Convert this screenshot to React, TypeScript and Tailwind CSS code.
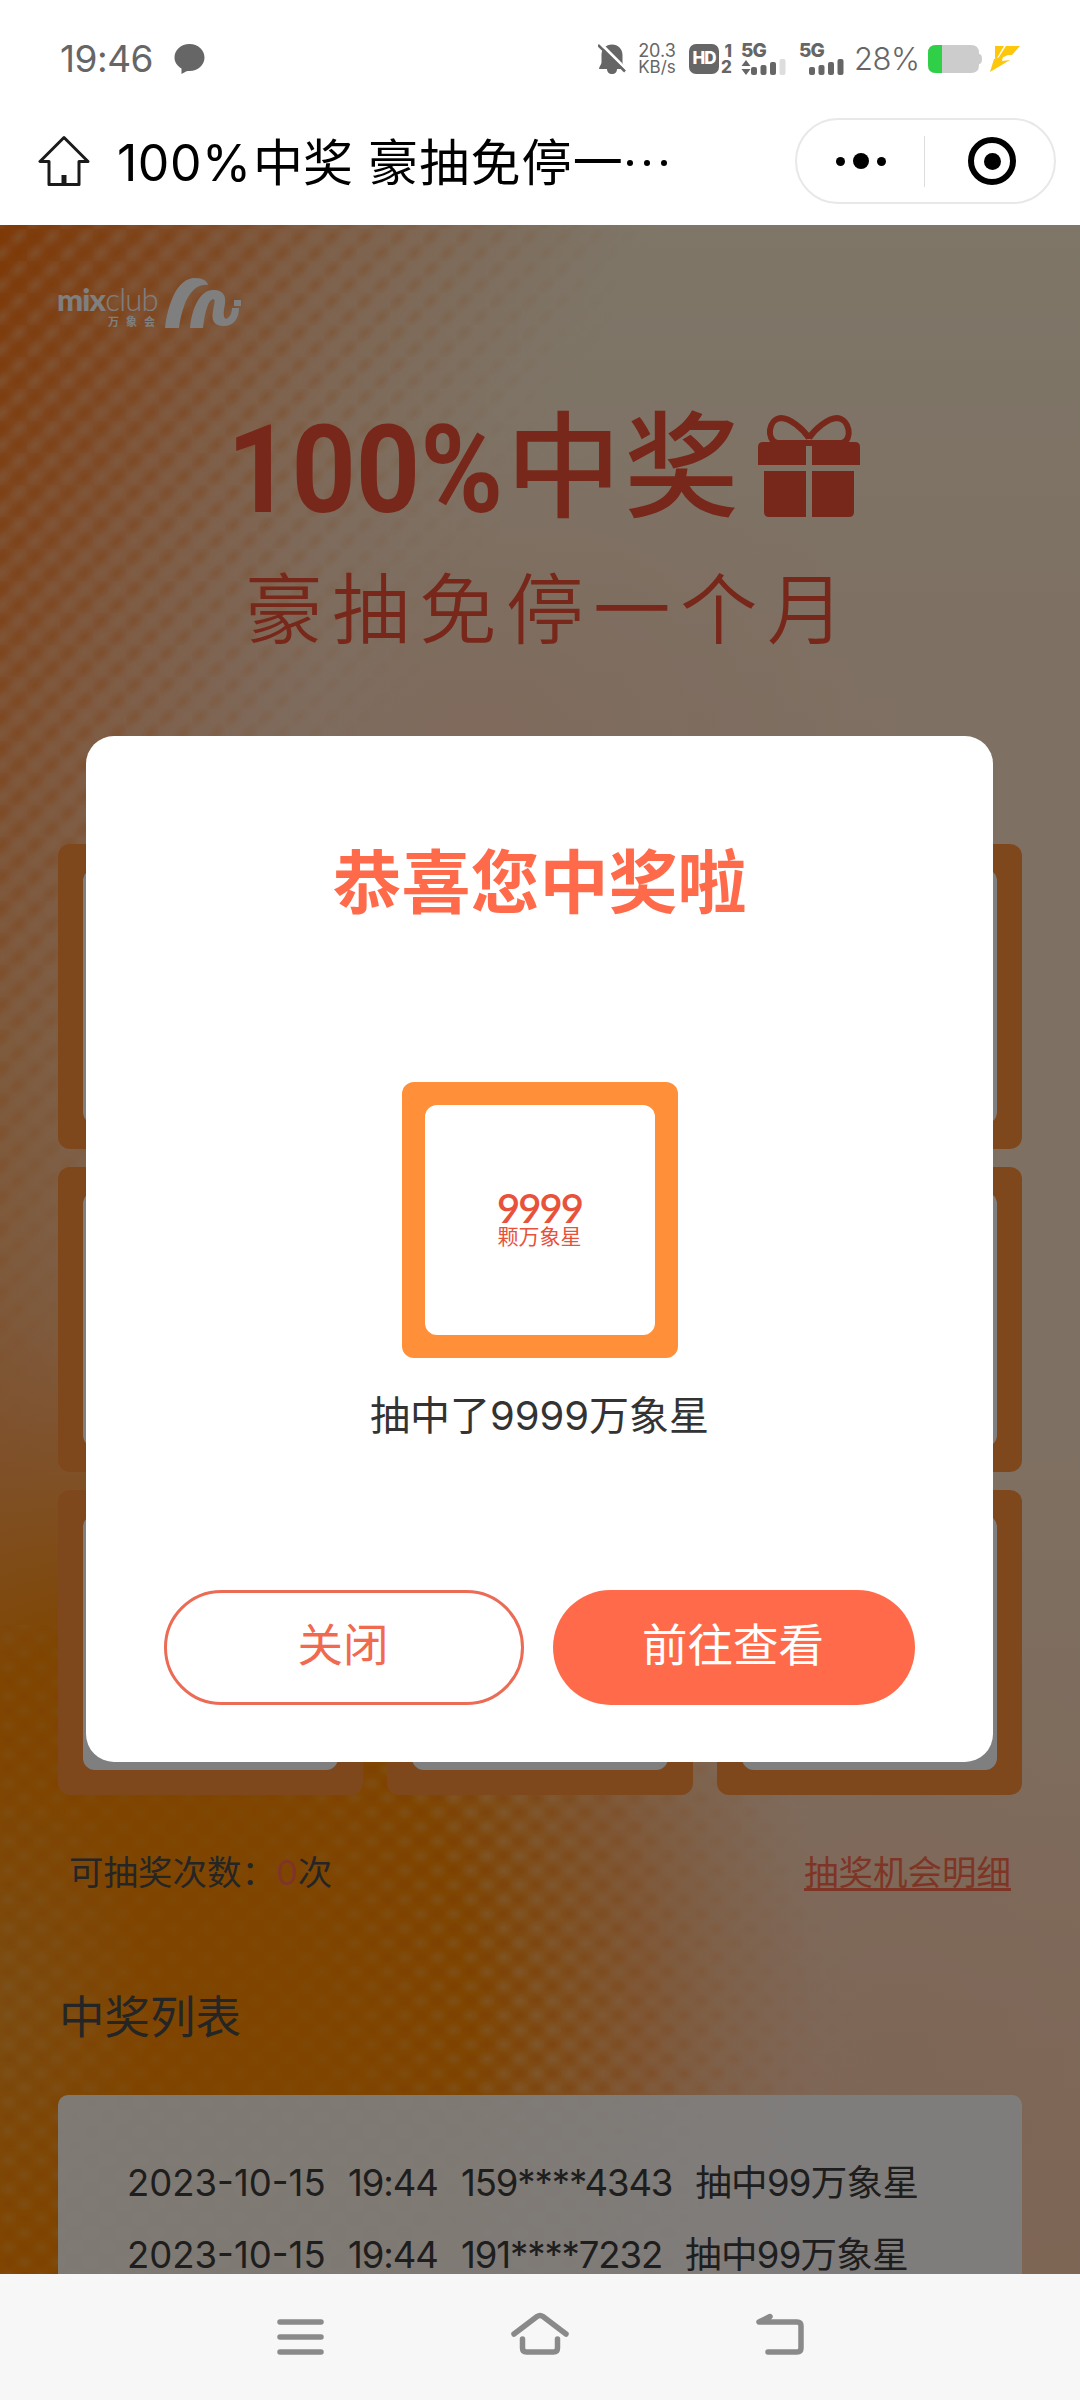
import type { ReactNode } from 'react'

const records = [
  { date: '2023-10-15', time: '19:44', phone: '159****4343', prize: '抽中99万象星' },
  { date: '2023-10-15', time: '19:44', phone: '191****7232', prize: '抽中99万象星' },
]

const cells = Array.from({ length: 9 }, (_, i) => i)

function SignalBars({ faded, arrows }: { faded?: boolean; arrows?: boolean }) {
  return (
    <svg width="46" height="16" viewBox="0 -2 46 16" fill="#666">
      {arrows && <path d="M5 -1l4.500 6H.5zM5 14l4.500-6H.5z" />}
      <rect x="10" y="6" width="6" height="8" rx="2" />
      <rect x="19.500" y="4" width="6" height="10" rx="2" />
      <rect x="29" y="1" width="6" height="13" rx="2" />
      <rect x="38.500" y="-2" width="6" height="16" rx="2" fill={faded ? '#ddd' : '#666'} />
    </svg>
  )
}

function StatusBar() {
  return (
    <div className="flex h-[117px] items-center pl-[60px] text-[#666]">
      <span className="w-[114px] text-[37px] leading-none tracking-[-0.5px]">19:46</span>
      <svg width="31" height="30" viewBox="0 0 31 30" fill="#666">
        <path d="M15.500 0C24 0 30.500 6 30.500 13.500S24 27 15.500 27c-1 0-2 0-3 .3L7.500 30V24.500C3 22 .5 18 .5 13.500.5 6 7 0 15.500 0z" />
      </svg>

      <svg className="ml-[393px]" width="28" height="31" viewBox="0 0 28 31">
        <path
          d="M14 1.500c6 0 10.500 4.500 10.500 10.500v7.500c0 2 2.500 4 2.500 6.500H1c0-2.500 2.500-4.500 2.500-6.500V12C3.500 6 8 1.500 14 1.500z"
          fill="#666"
        />
        <path d="M9 26h10c0 3-2 5-5 5s-5-2-5-5z" fill="#666" />
        <path d="M2 0l26 26" stroke="#fff" strokeWidth="3" />
        <path d="M0 2l27 26.500" stroke="#666" strokeWidth="2.500" />
      </svg>
      <div className="ml-[12px] w-[38px] text-center text-[17px] leading-[17px]">
        <div className="text-[18px]">20.3</div>
        <div>KB/s</div>
      </div>
      <div className="ml-[13px] flex h-[30px] w-[30px] items-center justify-center rounded-[7px] bg-[#666] text-[17px] font-extrabold tracking-[-1px] text-white">
        HD
      </div>
      <div className="ml-[2px] w-[11px] text-[17px] leading-[16px] font-extrabold">
        <div className="text-right">1</div>
        <div>2</div>
      </div>
      <div className="ml-[9px] w-[58px]">
        <div className="text-[19px] leading-[16px] font-extrabold tracking-[-1px]">5G</div>
        <SignalBars arrows faded />
      </div>
      <div className="w-[55px]">
        <div className="text-[19px] leading-[16px] font-extrabold tracking-[-1px]">5G</div>
        <SignalBars />
      </div>
      <span className="w-[74px] text-[31px] leading-none font-light tracking-[-0.5px]">28%</span>
      <svg width="54" height="28" viewBox="0 0 54 28">
        <path d="M8 0h35q8 0 8 8v1q3 0 3 5t-3 5v1q0 8-8 8H8q-8 0-8-8V8q0-8 8-8z" fill="#ccc" />
        <path d="M8 0h6v28H8q-8 0-8-8V8q0-8 8-8z" fill="#2fd048" />
      </svg>
      <svg className="ml-[8px]" width="30" height="26" viewBox="0 0 30 26" fill="#fdc70c">
        <path d="M5 0h9L7 12l-2 1z" />
        <path d="M16 0h14l-8 9h-4l-11 5z" />
        <path d="M4 13l9-3-1 5 8-1L0 26z" />
      </svg>
    </div>
  )
}

function NavBar() {
  return (
    <div className="flex h-[108px] items-start pl-[38px]">
      <svg className="mt-[18px]" width="52" height="52" viewBox="0 0 52 52" fill="none" stroke="#1a1a1a">
        <path
          d="M26 2.500L2 26.500h9V49.500h30V26.500h9z"
          strokeWidth="3"
          strokeLinejoin="round"
        />
        <path d="M26 40v9" strokeWidth="5" />
      </svg>
      <div className="ml-[27px] flex w-[678px] items-center pt-[2px] text-[50px] leading-[88px] text-black">
        <span className="w-[136px] tracking-[0.500px]">100%</span>
        <span className="w-[115px]">中奖</span>
        <span className="w-[259px] tracking-[1.200px]">豪抽免停一</span>
        <span className="flex gap-[11px]">
          <i className="size-[6px] rounded-full bg-black" />
          <i className="size-[6px] rounded-full bg-black" />
          <i className="size-[6px] rounded-full bg-black" />
        </span>
      </div>
      <div className="mt-px flex h-[86px] w-[261px] items-center rounded-full border-2 border-[#e8e8e8]">
        <div className="flex w-[127px] items-center justify-center gap-[8px]">
          <i className="size-[9px] rounded-full bg-black" />
          <i className="size-[16px] rounded-full bg-black" />
          <i className="size-[9px] rounded-full bg-black" />
        </div>
        <div className="h-[51px] w-px bg-[#ddd]" />
        <div className="ml-[43px] flex size-[48px] items-center justify-center rounded-full border-[6px] border-black">
          <i className="size-[17px] rounded-full bg-black" />
        </div>
      </div>
    </div>
  )
}

// Honeycomb-like orange backdrop: soft colour fields plus a staggered dimple texture
function Backdrop() {
  return (
    <svg className="absolute inset-0" width="1080" height="2049" viewBox="0 0 1080 2049">
      <defs>
        <linearGradient id="base" x1="0" y1="0" x2="0" y2="1">
          <stop offset="0" stopColor="#fcecd0" />
          <stop offset="0.25" stopColor="#fde0c6" />
          <stop offset="0.6" stopColor="#fce0c4" />
          <stop offset="1" stopColor="#fccdac" />
        </linearGradient>
        <radialGradient id="deep">
          <stop offset="0" stopColor="#ff8a00" />
          <stop offset="0.48" stopColor="#ff8c04" />
          <stop offset="0.74" stopColor="#ff9c48" stopOpacity="0.7" />
          <stop offset="1" stopColor="#ffb47c" stopOpacity="0" />
        </radialGradient>
        <linearGradient id="corner" gradientUnits="userSpaceOnUse" x1="0" y1="0" x2="430" y2="300">
          <stop offset="0" stopColor="#ff6a00" stopOpacity="0.85" />
          <stop offset="0.4" stopColor="#ff8234" stopOpacity="0.6" />
          <stop offset="1" stopColor="#ffa880" stopOpacity="0" />
        </linearGradient>
        <linearGradient id="edge" x1="0" y1="0" x2="1" y2="0">
          <stop offset="0" stopColor="#ff9440" stopOpacity="0.62" />
          <stop offset="1" stopColor="#ffb48a" stopOpacity="0" />
        </linearGradient>
        <radialGradient id="pink">
          <stop offset="0" stopColor="#ffc8a8" stopOpacity="0.5" />
          <stop offset="1" stopColor="#ffc8aa" stopOpacity="0" />
        </radialGradient>
        <radialGradient id="olive">
          <stop offset="0" stopColor="#f2a846" stopOpacity="0.5" />
          <stop offset="1" stopColor="#f2a846" stopOpacity="0" />
        </radialGradient>
        <radialGradient id="lit">
          <stop offset="0" stopColor="#ffdcb8" stopOpacity="0.45" />
          <stop offset="1" stopColor="#ffdcb8" stopOpacity="0" />
        </radialGradient>
        <radialGradient id="dim">
          <stop offset="0" stopColor="#f56a00" stopOpacity="0.55" />
          <stop offset="1" stopColor="#f57000" stopOpacity="0" />
        </radialGradient>
        <pattern id="weave" width="33" height="32" patternUnits="userSpaceOnUse" patternTransform="translate(-6 4)">
          <ellipse cx="8" cy="8" rx="14" ry="8" fill="url(#dim)" transform="rotate(-45 8 8)" />
          <ellipse cx="24.500" cy="24" rx="14" ry="8" fill="url(#dim)" transform="rotate(-45 24.500 24)" />
          <ellipse cx="24.500" cy="8" rx="14" ry="8" fill="url(#lit)" transform="rotate(-45 24.500 8)" />
          <ellipse cx="8" cy="24" rx="14" ry="8" fill="url(#lit)" transform="rotate(-45 8 24)" />
        </pattern>
        <pattern id="dimples" width="33" height="29" patternUnits="userSpaceOnUse">
          <ellipse cx="8.500" cy="7" rx="10" ry="8" fill="url(#dim)" />
          <ellipse cx="24.500" cy="21.500" rx="10" ry="8" fill="url(#dim)" />
          <ellipse cx="24.500" cy="7" rx="10" ry="8" fill="url(#lit)" />
          <ellipse cx="8.500" cy="21.500" rx="10" ry="8" fill="url(#lit)" />
        </pattern>
        <linearGradient id="fadeTop" gradientUnits="userSpaceOnUse" x1="0" y1="200" x2="440" y2="430">
          <stop offset="0" stopColor="#fff" stopOpacity="0.7" />
          <stop offset="0.5" stopColor="#fff" stopOpacity="0.42" />
          <stop offset="1" stopColor="#fff" stopOpacity="0" />
        </linearGradient>
        <linearGradient id="fadeBottom" gradientUnits="userSpaceOnUse" x1="0" y1="1900" x2="850" y2="1720">
          <stop offset="0" stopColor="#fff" stopOpacity="0.4" />
          <stop offset="0.25" stopColor="#fff" stopOpacity="0.12" />
          <stop offset="0.36" stopColor="#fff" stopOpacity="0.12" />
          <stop offset="0.62" stopColor="#fff" stopOpacity="0.7" />
          <stop offset="0.8" stopColor="#fff" stopOpacity="0.25" />
          <stop offset="1" stopColor="#fff" stopOpacity="0" />
        </linearGradient>
        <mask id="topField">
          <rect width="900" height="1400" fill="url(#fadeTop)" />
        </mask>
        <mask id="bottomField">
          <rect y="1400" width="900" height="649" fill="url(#fadeBottom)" />
        </mask>
      </defs>
      <rect width="1080" height="2049" fill="url(#base)" />
      <ellipse cx="480" cy="520" rx="420" ry="330" fill="url(#pink)" />
      <ellipse cx="900" cy="1850" rx="360" ry="420" fill="url(#pink)" />
      <rect width="330" height="1500" fill="url(#edge)" />
      <rect width="1080" height="800" fill="url(#corner)" />
      <ellipse cx="150" cy="1790" rx="670" ry="800" fill="url(#deep)" />
      <ellipse cx="0" cy="1780" rx="150" ry="240" fill="url(#olive)" />
      <rect width="900" height="1400" fill="url(#weave)" mask="url(#topField)" />
      <rect y="1400" width="900" height="649" fill="url(#dimples)" mask="url(#bottomField)" />
    </svg>
  )
}

function Logo() {
  return (
    <div className="flex h-[50px] items-start pl-[57px] text-white">
      <div className="w-[108px] pt-[6px]">
        <div className="font-['Lato'] text-[31px] leading-[30px] tracking-[-0.800px]">
          <span className="font-black">mix</span>
          <span className="font-light">club</span>
        </div>
        <div className="pl-[51px] text-[11px] leading-[16px] font-bold tracking-[7px]">万象会</div>
      </div>
      <svg width="78" height="50" viewBox="0 0 78 50" fill="#fff">
        <path d="M0 50C3 26 12 0 30 0C38 0 42 3 43 7C28 5 18 22 14 50z" />
        <path d="M25 50C27 30 35 12 48 12C60 12 62 20 59 31C58 40 60 43 64 39C66 37 67 33 67 30H74C74 41 68 48 59 48C49 48 46 42 48 33C49 26 51 21 48 21C43 22 40 34 38 50z" />
        <path d="M69 22h7v6h-7z" />
      </svg>
    </div>
  )
}

function GiftIcon() {
  return (
    <svg width="102" height="102" viewBox="0 0 102 102" fill="#f05034">
      <path
        d="M51 23C45 14 32 3 23 3C10 4 8 25 19 28H51M51 23C57 14 70 3 79 3C92 4 95 25 84 28H51"
        fill="none"
        stroke="#f05034"
        strokeWidth="6"
      />
      <path d="M5 27h43v23H0V32q0-5 5-5zM54 27h43q5 0 5 5v18H54z" />
      <path d="M6 56h42v46H11q-5 0-5-5zM54 56h42v41q0 5-5 5H54z" />
    </svg>
  )
}

function Hero() {
  return (
    <div className="text-[#f05034]">
      <div className="flex h-[134px] items-center pl-[227px]">
        <div className="w-[279px]">
          <div className="w-[320px] origin-left scale-x-[0.92] pt-[7px] font-['Roboto'] text-[122px] leading-none font-bold">
            100%
          </div>
        </div>
        <div className="w-[252px] pb-[2px] text-[115px] leading-none font-medium tracking-[3px]">中奖</div>
        <div className="pb-[2px]">
          <GiftIcon />
        </div>
      </div>
      <div className="mt-[21px] pb-px pl-[245px] text-[77.500px] leading-[110px] font-[350] tracking-[9.500px]">
        豪抽免停一个月
      </div>
    </div>
  )
}

function Dialog() {
  return (
    <div className="absolute top-[511px] left-[86px] flex h-[1026px] w-[907px] flex-col items-center rounded-[28px] bg-white">
      <h2 className="mt-[102px] text-[69px] leading-[90px] font-bold text-[#ff6b4a]">
        恭喜您中奖啦
      </h2>
      <div className="mt-[154px] size-[276px] rounded-[12px] bg-[#ff8f38] p-[23px]">
        <div className="flex size-full flex-col items-center justify-center rounded-[12px] bg-white text-[#e8523a]">
          <div className="font-['Lato'] text-[40px] leading-[34px] font-semibold tracking-[-2px]">9999</div>
          <div className="text-[21px] leading-[24px]">颗万象星</div>
        </div>
      </div>
      <p className="mt-[29px] text-[40px] leading-[58px] text-[#333]">抽中了9999万象星</p>
      <div className="mt-[145px] flex gap-[29px]">
        <Button className="w-[360px] border-[3px] border-[#ec6b55] text-[#f06a50]">关闭</Button>
        <Button className="w-[362px] bg-[#ff6b4a] text-white">前往查看</Button>
      </div>
    </div>
  )
}

function Button({ className, children }: { className: string; children: ReactNode }) {
  return (
    <button className={`flex h-[115px] items-center justify-center rounded-full pr-[2px] pb-[2px] text-[45.500px] ${className}`}>
      {children}
    </button>
  )
}

function SystemNav() {
  return (
    <div className="flex h-[126px] items-start bg-[#f7f7f7] pt-[37px] pl-[277px]">
      <svg width="47" height="46" viewBox="0 0 47 46" stroke="#8a8a8a" strokeWidth="5.500" strokeLinecap="round">
        <path d="M3 11h41M3 26h41M3 41h41" />
      </svg>
      <svg className="ml-[186px]" width="60" height="46" viewBox="0 0 60 46" fill="none" stroke="#8a8a8a" strokeWidth="5.500" strokeLinecap="round">
        <path d="M4 23L27 5.500q3-2 6 0L56 23" />
        <path d="M12.500 28v9q0 4 4 4h27q4 0 4-4v-9" />
      </svg>
      <svg className="ml-[186px]" width="50" height="46" viewBox="0 0 50 46" fill="none" stroke="#8a8a8a" strokeWidth="5.500" strokeLinecap="round" strokeLinejoin="round">
        <path d="M14 5.500L3 11h38q4 0 4 4v22q0 4-4 4H12" />
      </svg>
    </div>
  )
}

export default function App() {
  return (
    <div className="h-[2400px] w-[1080px] overflow-hidden bg-white font-['Inter','Noto_Sans_CJK_SC',sans-serif]">
      <StatusBar />
      <NavBar />

      <main className="relative h-[2049px] overflow-hidden">
        <Backdrop />
        <div className="relative pt-[53px]">
          <Logo />
          <div className="h-[72px]" />
          <Hero />

          <div className="mt-[178px] grid grid-cols-3 gap-x-[24px] gap-y-[18px] px-[58px]">
            {cells.map((cell) => (
              <div key={cell} className="h-[305px] rounded-[12px] bg-[#ff8f38] p-[25px]">
                <div className="size-full rounded-[12px] bg-white" />
              </div>
            ))}
          </div>

          <div className="mt-[53px] flex h-[50px] items-center justify-between pr-[69px] pl-[69px] text-[34.500px] text-[#4a4a4a]">
            <div>
              可抽奖次数：<span className="text-[#ff6b4a]">0</span>次
            </div>
            <a className="text-[#ff6b4a] underline decoration-[3px] underline-offset-[3px]">抽奖机会明细</a>
          </div>

          <h3 className="mt-[85px] pl-[59px] text-[45.500px] leading-[70px] text-[#4a4a4a]">中奖列表</h3>

          <div className="mx-[58px] mt-[42px] flex h-[200px] flex-col gap-[34px] rounded-t-[10px] bg-white/90 pt-[69px] pl-[69px] text-[36.500px] leading-[38px] text-[#3c3c3c]">
            {records.map((r) => (
              <div key={r.phone} className="flex whitespace-nowrap">
                <span className="w-[221px]">{r.date}</span>
                <span className="w-[113px] tracking-[-1.100px]">{r.time}</span>
                <span className="mr-[23px] tracking-[-1.100px]">{r.phone}</span>
                <span className="tracking-[-0.700px]">{r.prize}</span>
              </div>
            ))}
          </div>
        </div>

        <div className="absolute inset-0 bg-black/50" />
        <Dialog />
      </main>

      <SystemNav />
    </div>
  )
}
